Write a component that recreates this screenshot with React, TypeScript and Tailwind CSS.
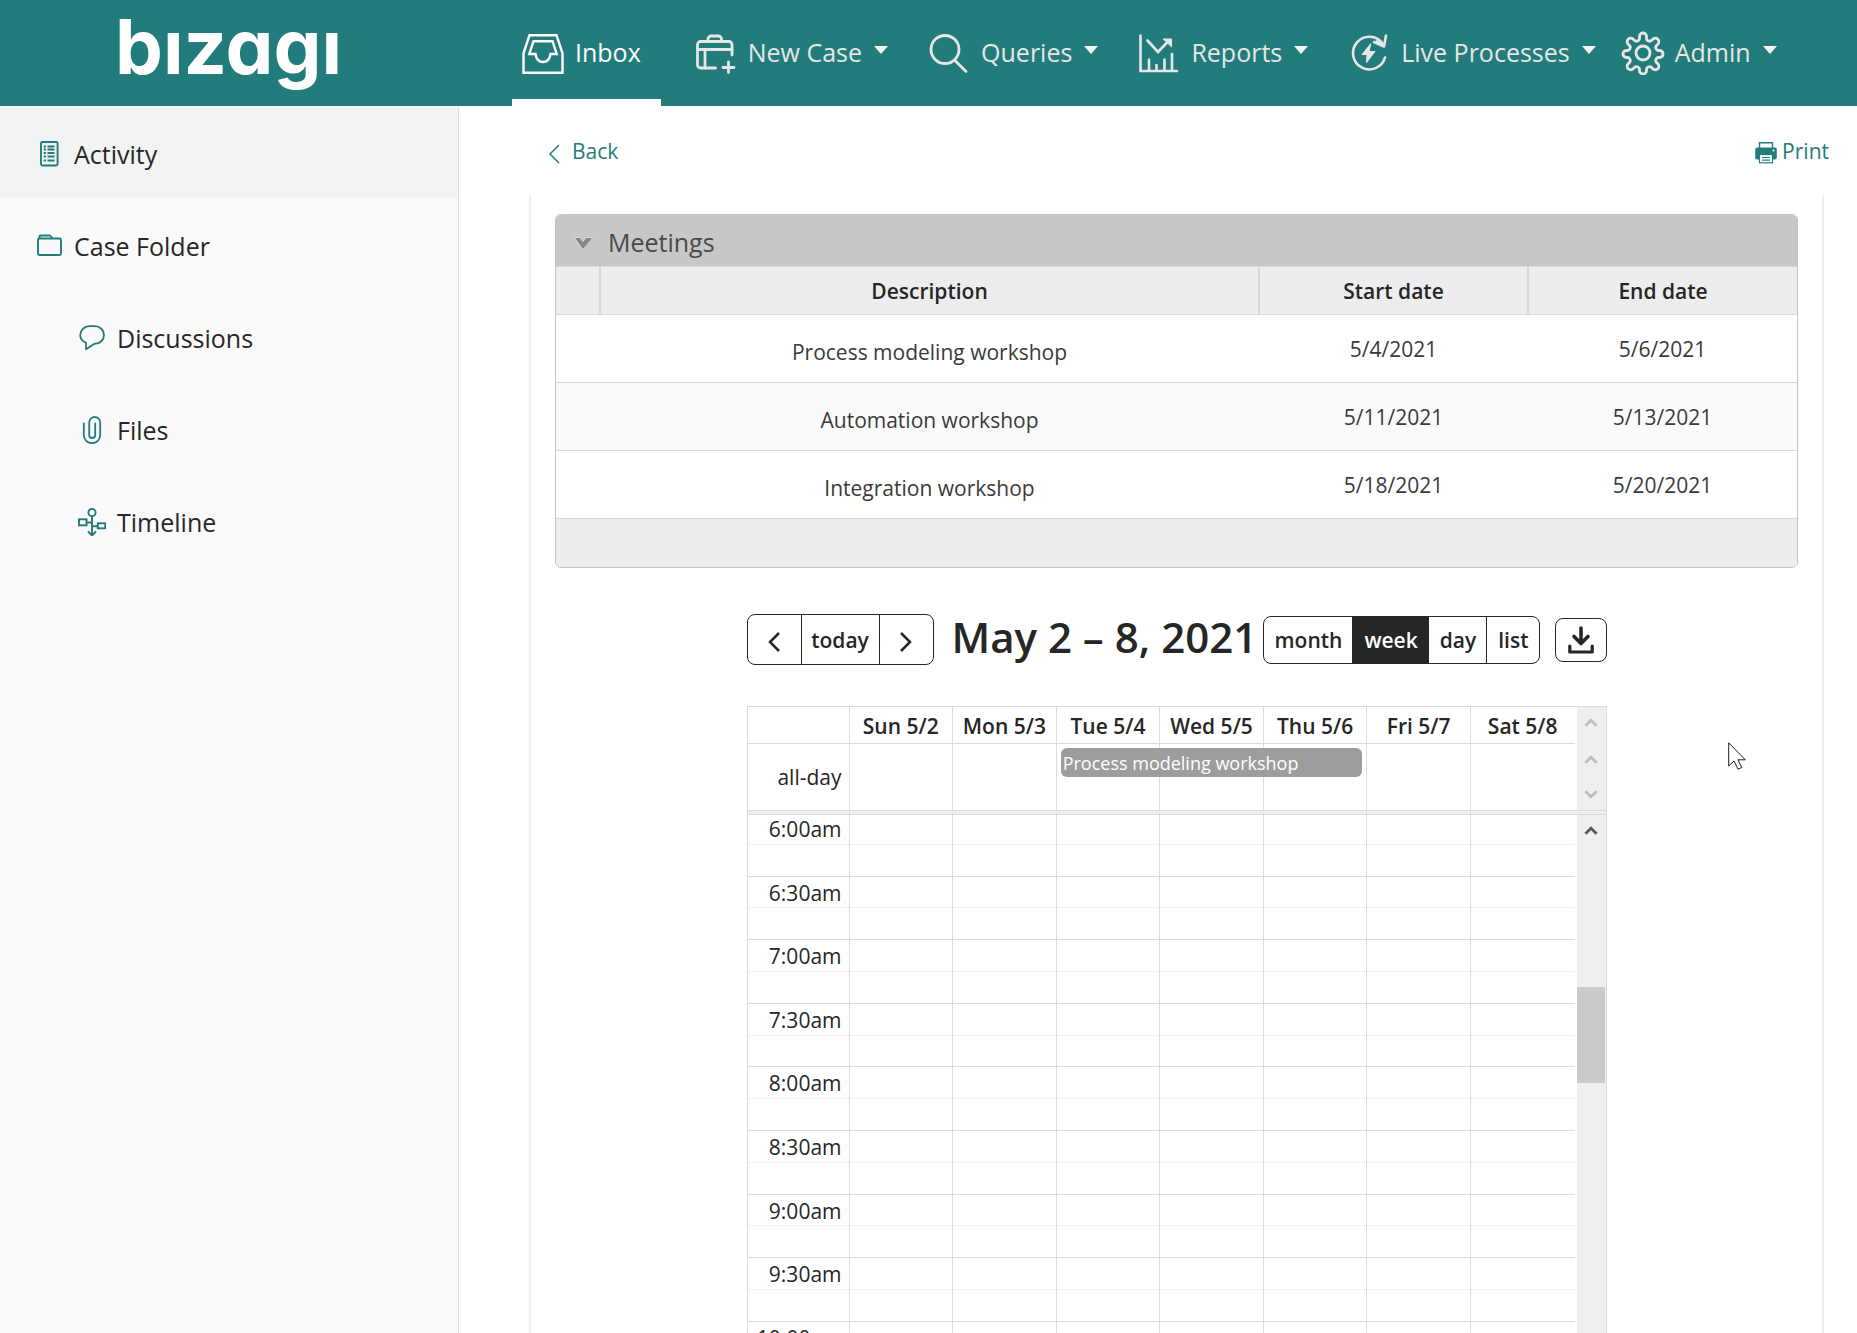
import { useState } from "react";
import type { ReactNode } from "react";

// ICONS
const InboxIcon = () => (
  <svg viewBox="0 0 44 44" className="h-11 w-11" fill="none" stroke="currentColor" strokeWidth="2.4">
    <path d="M8.5 4.2h27l6 18.3v19.3h-39V22.5z" />
    <path d="M12.5 10.2h19l4.2 12.8h-6.2c-.8 5.5-3.5 8-7.5 8s-6.7-2.5-7.5-8H8.3z" />
  </svg>
);

const NewCaseIcon = () => (
  <svg viewBox="0 0 44 44" className="h-11 w-11" fill="none" stroke="currentColor" strokeWidth="2.8" strokeLinecap="round" strokeLinejoin="round">
    <path d="M38 24V13.500a3 3 0 0 0-3-3H6.500a3 3 0 0 0-3 3V34a3 3 0 0 0 3 3h15" />
    <path d="M3.500 18.500H38M11 18.500V37M14 10.500V8a3 3 0 0 1 3-3h7.500a3 3 0 0 1 3 3v2.500M34.500 31v10.500M29 36.500h11" />
  </svg>
);

const QueriesIcon = () => (
  <svg viewBox="0 0 44 44" className="h-11 w-11" fill="none" stroke="currentColor" strokeWidth="2.8" strokeLinecap="round">
    <circle cx="18" cy="18.500" r="14" />
    <path d="M27.500 29 39 40.500" />
  </svg>
);

const ReportsIcon = () => (
  <svg viewBox="0 0 44 44" className="h-11 w-11" fill="none" stroke="currentColor" strokeWidth="2.6" strokeLinecap="round">
    <path d="M3.500 4.500V40h36.500M12 28.500v11M19.500 34v6M27.500 28.500v11M35 23V40" />
    <path d="m10.500 9.500 10.500 11.500L31.500 10" />
    <path d="M26.500 8h8v7.500z" fill="currentColor" strokeWidth="1" />
  </svg>
);

const LiveIcon = () => (
  <svg viewBox="0 0 44 44" className="h-11 w-11" fill="none" stroke="currentColor" strokeWidth="2.600" strokeLinecap="round" strokeLinejoin="round">
    <path d="M38 26.500A16.300 16.300 0 1 1 35.500 12.500" />
    <path d="M39 4.500 37 15.500 27 11" />
    <path d="M30 10.500 36 14" strokeWidth="3" />
    <path d="M23.500 13 15 23.500h5L19.500 31.500l8.500-11h-5.500z" fill="currentColor" strokeWidth="1" />
  </svg>
);

const AdminIcon = () => (
  <svg viewBox="0 0 44 44" className="h-11 w-11" fill="none" stroke="currentColor" strokeWidth="2.800" strokeLinejoin="round">
    <circle cx="22" cy="22" r="7" />
    <path d="M18.500 5.500a3.500 3.500 0 0 1 7 0V8c0 1.500 3.200 3 4.600 1.800l1.700-1.600a3.500 3.500 0 0 1 5 5l-1.700 1.700c-1.100 1.200.4 4.600 1.900 4.600h1.500a3.500 3.500 0 0 1 0 7H37c-1.500 0-3 3.200-1.900 4.500l1.700 1.800a3.500 3.500 0 0 1-5 5l-1.700-1.700C28.700 35 25.500 36.500 25.500 38v1.500a3.500 3.500 0 0 1-7 0V38c0-1.500-3.200-3-4.600-1.900l-1.700 1.700a3.500 3.500 0 0 1-5-5l1.700-1.800c1.100-1.300-.4-4.500-1.900-4.500H5.500a3.500 3.500 0 0 1 0-7H7c1.500 0 3-3.400 1.900-4.600l-1.700-1.700a3.500 3.500 0 0 1 5-5l1.700 1.600C15.300 11 18.500 9.500 18.500 8z" />
  </svg>
);

const ActivityIcon = () => (
  <svg viewBox="0 0 28 28" className="h-7 w-7" fill="none" stroke="currentColor" strokeWidth="1.900">
    <rect x="6" y="2" width="16.600" height="23.500" rx="1.500" />
    <path d="M8.700 6.500h2.200M8.700 9.500h2.200M8.700 13h2.200M8.700 16.500h2.200M8.700 20.500h2.200M12.500 6.500h7M12.500 9.500h7M12.500 13h7M12.500 16.500h7M12.500 20.500h7" />
  </svg>
);

const FolderIcon = () => (
  <svg viewBox="0 0 28 28" className="h-7 w-7" fill="none" stroke="currentColor" strokeWidth="1.900" strokeLinejoin="round">
    <rect x="3" y="6.500" width="23" height="16.500" rx="1.500" />
    <path d="M4.500 6.300V4.500a1 1 0 0 1 1-1H15l2.500 3" />
  </svg>
);

const DiscussionIcon = () => (
  <svg viewBox="0 0 28 28" className="h-7 w-7" fill="none" stroke="currentColor" strokeWidth="1.800" strokeLinejoin="round">
    <path d="M11 2.200h6a9 9 0 0 1 9 8.800c0 5-4 8.700-9.500 8.800L8 25.300v-6.600C4.500 17.300 2.200 14.500 2.200 11A9 9 0 0 1 11 2.200z" />
  </svg>
);

const ClipIcon = () => (
  <svg viewBox="0 0 28 28" className="h-7 w-7" fill="none" stroke="currentColor" strokeWidth="1.800" strokeLinecap="round">
    <path d="M5.800 7.500v11.500a8.200 8.200 0 0 0 16.400 0V6.500a5.500 5.500 0 0 0-11 0v12.500a3 3 0 0 0 6 0V7.500" />
  </svg>
);

const TimelineIcon = () => (
  <svg viewBox="0 0 28 28" className="h-7 w-7" fill="none" stroke="currentColor" strokeWidth="1.900">
    <circle cx="14" cy="4.500" r="3.600" />
    <path d="M14 8v19M9 14.500h5M14 18.200h5.500M10 23.500l4 4 4-4" />
    <rect x="1" y="11.300" width="7.500" height="6" />
    <rect x="19.800" y="15.300" width="7.400" height="5" />
  </svg>
);

const PrintIcon = () => (
  <svg viewBox="0 0 24 24" className="h-6 w-6">
    <path d="M5.500 8V2.700h13V8" fill="none" stroke="#237c7c" strokeWidth="1.400" />
    <rect x="1.200" y="7.500" width="21.600" height="12" rx="2" fill="#237c7c" />
    <rect x="5.500" y="14.500" width="13" height="8.300" fill="#fff" stroke="#237c7c" strokeWidth="1.200" />
    <path d="M8 17.500h8M8 20.200h8" stroke="#237c7c" strokeWidth="1.200" />
    <circle cx="19.500" cy="10.500" r="1" fill="#fff" />
  </svg>
);

const CollapseIcon = () => (
  <svg viewBox="0 0 20 20" className="h-5 w-5">
    <path d="M0 4h6l4 4 4-4h6l-10 13z" fill="#dadada" />
    <path d="M2 5h4.500L10 9l3.500-4H19l-9 11z" fill="#868686" />
  </svg>
);

const DownloadIcon = () => (
  <svg viewBox="0 0 28 28" className="h-7 w-7" fill="none" stroke="currentColor" strokeWidth="3.600" strokeLinecap="round" strokeLinejoin="round">
    <path d="M14 2V17M7 10.500l7 7 7-7" />
    <path d="M2.800 20v6h22.400v-6" strokeWidth="3.200" />
  </svg>
);

type ChevronProps = { d: string; className: string; strokeWidth?: number };

const Chevron = ({ d, className, strokeWidth = 2.5 }: ChevronProps) => (
  <svg viewBox="0 0 20 20" className={className} fill="none" stroke="currentColor" strokeWidth={strokeWidth}>
    <path d={d} />
  </svg>
);

const LEFT = "M15 1 6 10l9 9";
const RIGHT = "M5 1l9 9-9 9";
const UP = "M2 14l8-8 8 8";
const DOWN = "M2 6l8 8 8-8";

// DATA
const navItems: { label: string; icon: ReactNode; menu: boolean; space: string }[] = [
  { label: "Inbox", icon: <InboxIcon />, menu: false, space: "mr-6 pr-5" },
  { label: "New Case", icon: <NewCaseIcon />, menu: true, space: "pr-[30px]" },
  { label: "Queries", icon: <QueriesIcon />, menu: true, space: "pr-[30px]" },
  { label: "Reports", icon: <ReportsIcon />, menu: true, space: "pr-[30px]" },
  { label: "Live Processes", icon: <LiveIcon />, menu: true, space: "pr-4" },
  { label: "Admin", icon: <AdminIcon />, menu: true, space: "" },
];

const sideItems = [
  { label: "Activity", icon: <ActivityIcon />, pad: "pl-[35px]" },
  { label: "Case Folder", icon: <FolderIcon />, pad: "pl-[35px]" },
  { label: "Discussions", icon: <DiscussionIcon />, pad: "pl-[78px]" },
  { label: "Files", icon: <ClipIcon />, pad: "pl-[78px]" },
  { label: "Timeline", icon: <TimelineIcon />, pad: "pl-[78px]" },
];

const meetings = [
  { name: "Process modeling workshop", start: "5/4/2021", end: "5/6/2021" },
  { name: "Automation workshop", start: "5/11/2021", end: "5/13/2021" },
  { name: "Integration workshop", start: "5/18/2021", end: "5/20/2021" },
];

const days = ["Sun 5/2", "Mon 5/3", "Tue 5/4", "Wed 5/5", "Thu 5/6", "Fri 5/7", "Sat 5/8"];
const slots = ["6:00am", "6:30am", "7:00am", "7:30am", "8:00am", "8:30am", "9:00am", "9:30am", "10:00am", "10:30am"];
const views = ["month", "week", "day", "list"];

// HEADER
const Header = () => (
  <header className="flex h-[106px] shrink-0 bg-[#237c7c]">
    <div className="w-[512px] shrink-0 pl-[115px]">
      <a href="#" aria-label="bizagi" className="block font-['Inter',sans-serif] text-[76px] font-bold leading-[92px] text-white [font-feature-settings:'cv11']">
        bızagı
      </a>
    </div>
    <nav className="flex">
      {navItems.map((item) => (
        <a
          key={item.label}
          href="#"
          className={`flex items-center gap-2.5 whitespace-nowrap border-b-[7px] pl-[9px] pt-[7px] text-[25px] ${item.space} ${
            item.menu ? "border-transparent text-[#e6e6e6]" : "border-white text-white"
          }`}
        >
          {item.icon}
          {item.label}
          {item.menu && (
            <svg viewBox="0 0 14 8" className="-mt-1.5 ml-0.5 h-2 w-3.5" fill="#f4f4f4">
              <path d="M0 0h14L7 8z" />
            </svg>
          )}
        </a>
      ))}
    </nav>
  </header>
);

// SIDEBAR
const Sidebar = () => (
  <aside className="w-[459px] shrink-0 border-r border-[#dedede] bg-[#fafafa]">
    {sideItems.map((item, i) => (
      <a key={item.label} href="#" className={`flex h-[92px] items-center gap-[11px] pt-1 text-[25px] ${item.pad} ${i === 0 ? "bg-[#f2f4f3]" : ""}`}>
        <span className="text-[#237c7c]">{item.icon}</span>
        <span className="pt-0.5">{item.label}</span>
      </a>
    ))}
  </aside>
);

// MEETINGS TABLE
const Meetings = () => (
  <section className="overflow-hidden rounded-md border border-[#c4c4c4]">
    <h2 className="flex h-[51px] items-center gap-[15px] bg-[#c7c7c7] pl-[17px] pt-1 text-[25px] text-[#4a4a4a]">
      <CollapseIcon />
      Meetings
    </h2>
    <table className="w-full table-fixed border-collapse text-center text-[21px]">
      <thead>
        <tr className="h-12 border-y border-[#d9d9d9] bg-[#ededed]">
          <th className="w-11 border-r-2 border-[#d9d9d9]" />
          <th className="border-r-2 border-[#d9d9d9] pt-0.5 font-semibold">Description</th>
          <th className="w-[269px] border-r-2 border-[#d9d9d9] pt-0.5 font-semibold">Start date</th>
          <th className="w-[269px] pt-0.5 font-semibold">End date</th>
        </tr>
      </thead>
      <tbody className="text-[#3a3a3a]">
        {meetings.map((m) => (
          <tr key={m.name} className="h-[68px] border-b border-[#d9d9d9] even:bg-[#fafafa]">
            <td />
            <td className="pt-2">{m.name}</td>
            <td className="pt-0.5">{m.start}</td>
            <td className="pt-0.5">{m.end}</td>
          </tr>
        ))}
      </tbody>
    </table>
    <div className="h-12 bg-[#ededed]" />
  </section>
);

// CALENDAR TOOLBAR
const Toolbar = () => {
  const [view, setView] = useState("week");
  return (
    <div className="flex h-[51px] items-center font-semibold">
      <div className="flex h-[51px] divide-x divide-[#262626] overflow-hidden rounded-lg border border-[#262626] text-[21px]">
        <button aria-label="previous" className="flex w-[54px] items-center justify-center">
          <Chevron d={LEFT} className="mt-1 h-5 w-5" />
        </button>
        <button className="w-[78px] pt-0.5">today</button>
        <button aria-label="next" className="flex w-[53px] items-center justify-center">
          <Chevron d={RIGHT} className="mt-1 h-5 w-5" />
        </button>
      </div>
      <h1 className="flex-1 whitespace-nowrap pb-1.5 pl-[18px] text-[42px]">May 2 – 8, 2021</h1>
      <div className="flex h-12 divide-x divide-[#262626] overflow-hidden rounded-lg border border-[#262626] text-[21px]">
        {views.map((v) => (
          <button key={v} onClick={() => setView(v)} className={`pl-[11px] pr-2.5 pt-0.5 ${v === view ? "bg-[#262626] text-white" : ""}`}>
            {v}
          </button>
        ))}
      </div>
      <button aria-label="download" className="ml-[15px] flex h-11 w-[52px] items-center justify-center rounded-lg border border-[#262626]">
        <DownloadIcon />
      </button>
    </div>
  );
};

const columns = "grid grid-cols-[102px_repeat(7,minmax(0,1fr))]";
const dotted = "bg-[linear-gradient(90deg,#e4e4e4_50%,transparent_50%)] bg-[size:2px_1px] bg-[position:0_50%] bg-repeat-x";

// WEEK VIEW
const Calendar = () => (
  <div className="mt-[41px] border border-b-0 border-[#dcdcdc] text-[21px] leading-7">
    <div className="flex">
      <div className="min-w-0 flex-1">
        <div className={`${columns} h-9 divide-x divide-[#dcdcdc] text-center font-semibold`}>
          <span />
          {days.map((d) => (
            <span key={d} className="whitespace-nowrap pt-[5px]">{d}</span>
          ))}
        </div>
        <div className="relative border-t border-[#dcdcdc]">
          <div className={`${columns} h-[66px] divide-x divide-[#dcdcdc]`}>
            <span className="flex items-center justify-end pr-[7px]">all-day</span>
            {days.map((d) => (
              <span key={d} />
            ))}
          </div>
          <div className={`${columns} absolute inset-x-0 top-1`}>
            <div className="col-start-4 col-end-7 ml-1 mr-[5px] h-[29px] rounded-md bg-[#9d9d9d] pl-0.5 pt-px text-lg text-white">
              Process modeling workshop
            </div>
          </div>
        </div>
      </div>
      <div className="ml-0.5 flex w-[29px] flex-col items-center bg-[#efefef] text-[#bdbdbd]">
        <Chevron d={UP} className="mt-[9px] h-3.5 w-3.5" strokeWidth={4} />
        <Chevron d={UP} className="mt-[23px] h-3.5 w-3.5" strokeWidth={4} />
        <Chevron d={DOWN} className="mt-5 h-3.5 w-3.5" strokeWidth={4} />
      </div>
    </div>
    <div className="h-[5px] border-y border-[#dcdcdc] bg-[#efefef]" />
    <div className="flex">
      <div className="-mt-0.5 grid h-[636px] min-w-0 flex-1 auto-rows-fr">
        {slots.map((s) => (
          <div key={s} className={`${columns} divide-x divide-[#dcdcdc] border-b border-b-[#dcdcdc]`}>
            <div className={`pr-[7px] pt-0.5 text-right ${dotted}`}>{s}</div>
            {days.map((d) => (
              <div key={d} className={dotted} />
            ))}
          </div>
        ))}
      </div>
      <div className="ml-0.5 w-[29px] bg-[#efefef] text-[#5a5a5a]">
        <Chevron d={UP} className="mx-auto mt-[9px] h-3.5 w-3.5" strokeWidth={4} />
        <div className="mt-[149px] h-24 w-7 bg-[#cbcbcb]" />
      </div>
    </div>
  </div>
);

export default function App() {
  return (
    <div className="relative flex h-screen flex-col overflow-hidden bg-white font-['Open_Sans',sans-serif] text-[#262626]">
      <Header />
      <div className="flex min-h-0 flex-1">
        <Sidebar />
        <main className="flex min-w-0 flex-1 flex-col">
          <div className="flex h-[89px] shrink-0 items-center justify-between pl-[85px] pr-7 pt-0.5 text-[21px] text-[#237c7c]">
            <a href="#" className="flex items-center gap-2">
              <Chevron d={LEFT} className="mt-1 h-5 w-5" strokeWidth={1.5} />
              Back
            </a>
            <a href="#" className="flex items-center gap-1">
              <PrintIcon />
              Print
            </a>
          </div>
          <div className="ml-[70px] mr-[33px] min-h-0 flex-1 overflow-hidden border-x-2 border-[#f0f0f0] px-6 pt-[19px]">
            <Meetings />
            <div className="mx-auto mt-[46px] w-[860px]">
              <Toolbar />
              <Calendar />
            </div>
          </div>
        </main>
      </div>
      {/* POINTER */}
      <svg viewBox="0 0 19 28" className="pointer-events-none absolute left-[1728px] top-[742px] h-7 w-[19px]" fill="#fff" stroke="#1c1c2b" strokeWidth="1">
        <path d="M.7.8V24l5.300-5 4 8.200 3.700-1.700-3.700-7.700h7.300z" />
      </svg>
    </div>
  );
}
